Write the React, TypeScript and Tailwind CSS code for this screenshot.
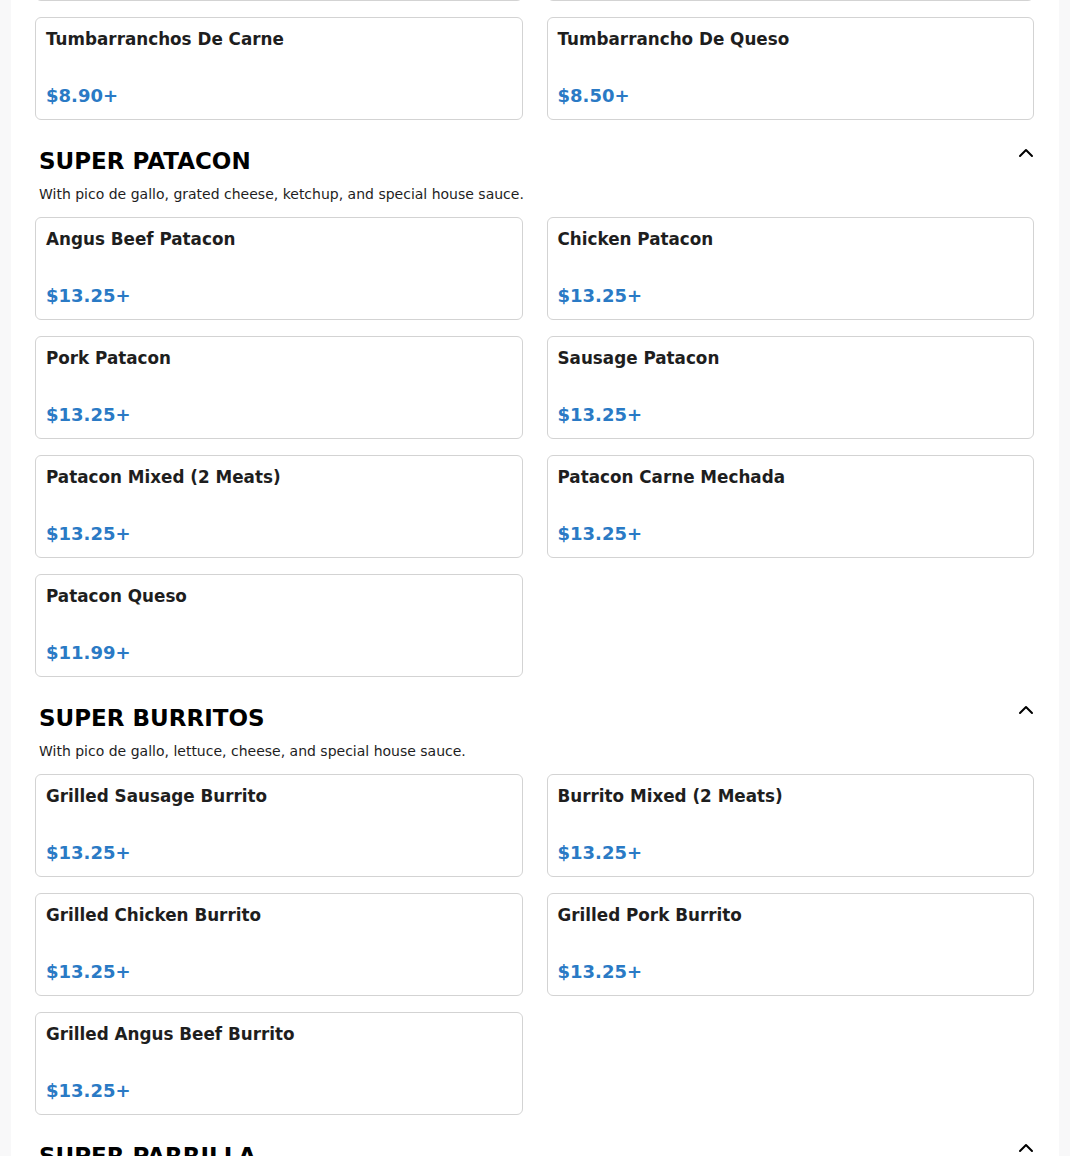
import { ChevronUp } from "lucide-react";

type Item = { name: string; price: string };

const sections: { title: string; note: string; items: Item[] }[] = [
  {
    title: "SUPER PATACON",
    note: "With pico de gallo, grated cheese, ketchup, and special house sauce.",
    items: [
      { name: "Angus Beef Patacon", price: "$13.25+" },
      { name: "Chicken Patacon", price: "$13.25+" },
      { name: "Pork Patacon", price: "$13.25+" },
      { name: "Sausage Patacon", price: "$13.25+" },
      { name: "Patacon Mixed (2 Meats)", price: "$13.25+" },
      { name: "Patacon Carne Mechada", price: "$13.25+" },
      { name: "Patacon Queso", price: "$11.99+" },
    ],
  },
  {
    title: "SUPER BURRITOS",
    note: "With pico de gallo, lettuce, cheese, and special house sauce.",
    items: [
      { name: "Grilled Sausage Burrito", price: "$13.25+" },
      { name: "Burrito Mixed (2 Meats)", price: "$13.25+" },
      { name: "Grilled Chicken Burrito", price: "$13.25+" },
      { name: "Grilled Pork Burrito", price: "$13.25+" },
      { name: "Grilled Angus Beef Burrito", price: "$13.25+" },
    ],
  },
  {
    title: "SUPER PARRILLA",
    note: "",
    items: [],
  },
];

function Card({ item }: { item?: Item }) {
  return (
    <div className="h-[103px] rounded-md border border-[#d3d3d3] bg-white px-[10px] pt-[9px] pb-[9px] flex flex-col justify-between">
      {item ? (
        <>
          <div className="text-[16.8px] font-bold leading-6 text-[#1e1e1e]">{item.name}</div>
          <div className="text-lg font-bold leading-7 text-[#2a7ac5]">{item.price}</div>
        </>
      ) : null}
    </div>
  );
}

export default function App() {
  return (
    <div className="h-screen bg-[#f8f8f9] font-['DejaVu_Sans',sans-serif] overflow-hidden">
      <div className="flow-root mx-[11px] min-h-full bg-white pl-6 pr-[25px] pb-40">
        {/* tail of the section above, only its bottom edge shows */}
        <div className="-mt-[102px] grid grid-cols-2 gap-x-6 gap-y-4">
          <Card />
          <Card />
          <Card item={{ name: "Tumbarranchos De Carne", price: "$8.90+" }} />
          <Card item={{ name: "Tumbarrancho De Queso", price: "$8.50+" }} />
        </div>

        {sections.map((s) => (
          <section key={s.title} className="mt-[27px]">
            <div className="flex items-start justify-between px-1">
              <h2 className="text-[23px] font-bold leading-7 text-black">{s.title}</h2>
              <ChevronUp size={24} strokeWidth={2} className="-mt-[6px] -mr-[8px] text-black" />
            </div>
            {s.note ? (
              <p className="mt-[9px] px-1 text-sm leading-5 text-[#1e1e1e]">{s.note}</p>
            ) : null}
            {s.items.length > 0 ? (
              <div className="mt-[13px] grid grid-cols-2 gap-x-6 gap-y-4">
                {s.items.map((it) => (
                  <Card key={it.name} item={it} />
                ))}
              </div>
            ) : null}
          </section>
        ))}
      </div>
    </div>
  );
}
